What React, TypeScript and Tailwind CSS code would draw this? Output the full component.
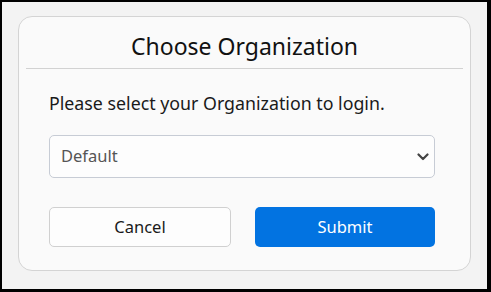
import React from 'react';

// ── Choose Organization dialog ───────────────────────────────────────────────

const ORGS = ['Default'];

function Chevron() {
  return (
    <svg width="12" height="8" viewBox="0 0 12 8" className="pointer-events-none">
      <path d="M1.5 1.5 L6 6 L10.5 1.5" fill="none" stroke="#444" strokeWidth="2.2" strokeLinecap="round" strokeLinejoin="round" />
    </svg>
  );
}

export default function App() {
  return (
    <div
      className="w-[491px] h-[292px] bg-[#f3f3f3] border-black border-t-2 border-l-2 border-r-[4px] border-b-[3px] pl-[16px] pt-[14px] pr-[16px] pb-[18px]"
      style={{ fontFamily: '"Noto Sans", "Open Sans", sans-serif' }}
    >
      <div className="h-full rounded-[14px] border border-[#d4d4d4] bg-[#fafafa] flex flex-col">
        {/* Header */}
        <div className="mx-[7px] h-[52px] border-b border-[#d2d2d2] flex items-center justify-center pt-[7px]">
          <h1 className="text-[23px] leading-none text-[#111]">Choose Organization</h1>
        </div>

        {/* Body */}
        <div className="pl-[30px] pr-[35px] flex flex-col">
          <p className="mt-[23px] text-[17.8px] leading-[22px] text-[#1a1a1a]">
            Please select your Organization to login.
          </p>

          <div className="relative mt-[21px] h-[43px]">
            <select
              defaultValue="Default"
              className="appearance-none w-full h-full rounded-[5px] border border-[#c7ccd5] bg-[#fdfdfd] pl-[11px] text-[16.5px] text-[#555] outline-none"
            >
              {ORGS.map((o) => (
                <option key={o}>{o}</option>
              ))}
            </select>
            <div className="absolute right-[6px] top-1/2 -translate-y-1/2 flex">
              <Chevron />
            </div>
          </div>

          <div className="mt-[29px] flex gap-[24px]">
            <button className="flex-1 h-[40px] rounded-[5px] border border-[#d0d0d0] bg-[#fdfdfd] text-[16.5px] text-[#1a1a1a]">
              Cancel
            </button>
            <button className="flex-1 h-[40px] rounded-[5px] bg-[#0273e1] text-[16.5px] text-white">
              Submit
            </button>
          </div>
        </div>
      </div>
    </div>
  );
}
